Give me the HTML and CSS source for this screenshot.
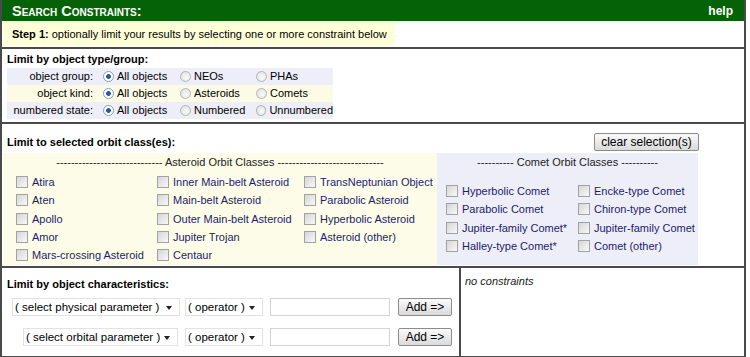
FILE: index.html
```html
<!DOCTYPE html>
<html>
<head>
    <title>Search Constraints</title>
    <link rel="stylesheet" href="styles.css">
</head>
<body>

<div class="panel">
    <div class="titlebar">
        <span class="title">Search Constraints:</span>
        <a class="help">help</a>
    </div>

    <div class="step">
        <span class="step-note"><b>Step 1:</b> optionally limit your results by selecting one or more constraint below</span>
    </div>

    <div class="section kinds">
        <div class="heading">Limit by object type/group:</div>
        <div class="choice-row odd">
            <span class="choice-label">object group:</span>
            <label class="opt"><span class="radio on"></span>All objects</label>
            <label class="opt"><span class="radio"></span>NEOs</label>
            <label class="opt"><span class="radio"></span>PHAs</label>
        </div>
        <div class="choice-row even">
            <span class="choice-label">object kind:</span>
            <label class="opt"><span class="radio on"></span>All objects</label>
            <label class="opt"><span class="radio"></span>Asteroids</label>
            <label class="opt"><span class="radio"></span>Comets</label>
        </div>
        <div class="choice-row odd">
            <span class="choice-label">numbered state:</span>
            <label class="opt"><span class="radio on"></span>All objects</label>
            <label class="opt"><span class="radio"></span>Numbered</label>
            <label class="opt"><span class="radio"></span>Unnumbered</label>
        </div>
    </div>

    <div class="section orbits">
        <div class="orbits-head">
            <div class="heading">Limit to selected orbit class(es):</div>
            <button class="btn">clear selection(s)</button>
        </div>
        <div class="orbit-tables">
            <div class="orbit-group asteroids">
                <div class="group-title">----------------------------- Asteroid Orbit Classes -----------------------------</div>
                <div class="check-grid ast-grid">
                    <label class="chk"><span class="box"></span>Atira</label>
                    <label class="chk"><span class="box"></span>Inner Main-belt Asteroid</label>
                    <label class="chk"><span class="box"></span>TransNeptunian Object</label>
                    <label class="chk"><span class="box"></span>Aten</label>
                    <label class="chk"><span class="box"></span>Main-belt Asteroid</label>
                    <label class="chk"><span class="box"></span>Parabolic Asteroid</label>
                    <label class="chk"><span class="box"></span>Apollo</label>
                    <label class="chk"><span class="box"></span>Outer Main-belt Asteroid</label>
                    <label class="chk"><span class="box"></span>Hyperbolic Asteroid</label>
                    <label class="chk"><span class="box"></span>Amor</label>
                    <label class="chk"><span class="box"></span>Jupiter Trojan</label>
                    <label class="chk"><span class="box"></span>Asteroid (other)</label>
                    <label class="chk"><span class="box"></span>Mars-crossing Asteroid</label>
                    <label class="chk"><span class="box"></span>Centaur</label>
                </div>
            </div>
            <div class="orbit-group comets">
                <div class="group-title">---------- Comet Orbit Classes ----------</div>
                <div class="comet-body">
                    <div class="check-grid comet-grid">
                        <label class="chk"><span class="box"></span>Hyperbolic Comet</label>
                        <label class="chk"><span class="box"></span>Encke-type Comet</label>
                        <label class="chk"><span class="box"></span>Parabolic Comet</label>
                        <label class="chk"><span class="box"></span>Chiron-type Comet</label>
                        <label class="chk"><span class="box"></span>Jupiter-family Comet*</label>
                        <label class="chk"><span class="box"></span>Jupiter-family Comet</label>
                        <label class="chk"><span class="box"></span>Halley-type Comet*</label>
                        <label class="chk"><span class="box"></span>Comet (other)</label>
                    </div>
                </div>
            </div>
        </div>
    </div>

    <div class="section chars">
        <div class="chars-form">
            <div class="heading">Limit by object characteristics:</div>
            <div class="param-row first">
                <span class="dropdown param-phys"><select><option>( select physical parameter )</option></select></span>
                <span class="dropdown op"><select><option>( operator )</option></select></span>
                <input type="text" class="value">
                <button class="btn add">Add =&gt;</button>
            </div>
            <div class="param-row second">
                <span class="dropdown param-orb"><select><option>( select orbital parameter )</option></select></span>
                <span class="dropdown op"><select><option>( operator )</option></select></span>
                <input type="text" class="value">
                <button class="btn add">Add =&gt;</button>
            </div>
        </div>
        <div class="chars-list">no constraints</div>
    </div>
</div>

</body>
</html>
```

FILE: styles.css
```css
body {
    margin: 0;
    background: #fff;
    font-family: 'Liberation Sans', Arial, sans-serif;
    font-size: 11px;
    color: #000;
}

.panel {
    width: 742px;
    border: 2px solid #4a4a4a;
    border-top: 0;
}

.titlebar {
    height: 21px;
    background: #066206;
    color: #fff;
    display: flex;
    justify-content: space-between;
    align-items: center;
    padding: 0 11px 0 10px;
    font-weight: bold;
}

.title {
    font-size: 14.5px;
    font-variant: small-caps;
}

.help {
    font-size: 12px;
    cursor: pointer;
}

.step {
    padding: 1px 0 1px 1px;
    border-bottom: 2px solid #4a4a4a;
}

.step-note {
    display: inline-block;
    background: #ffffd8;
    padding: 5px 8px 5px 9px;
    line-height: 14px;
}

.section {
    border-bottom: 2px solid #4a4a4a;
}

.heading {
    font-weight: bold;
    line-height: 14px;
}

/* object type / group */
.kinds {
    padding: 3px 0 3px 5px;
}

.kinds .heading {
    margin-bottom: 2px;
}

.choice-row {
    display: grid;
    grid-template-columns: 94px 77px 76px 79px;
    width: 326px;
    line-height: 17px;
}

.choice-row.odd {
    background: #eeeef8;
}

.choice-row.even {
    background: #fcfce6;
}

.choice-label {
    text-align: right;
    padding-right: 8px;
}

.opt {
    display: flex;
    align-items: center;
    padding-left: 2px;
    white-space: nowrap;
}

.radio {
    width: 9px;
    height: 9px;
    border-radius: 50%;
    border: 1px solid #b4b4b4;
    background: radial-gradient(circle at 60% 60%, #fafafa, #dcdcdc);
    margin-right: 3px;
}

.radio.on {
    border-color: #8a9ab8;
    background: radial-gradient(circle, #2a56a6 0, #2a56a6 2px, #fff 2.8px);
}

/* orbit classes */
.orbits {
    padding: 9px 0 1px 1px;
}

.orbits-head {
    display: flex;
    justify-content: space-between;
    align-items: center;
    padding: 0 45px 0 4px;
    margin-bottom: 2px;
}

.btn {
    font-family: 'Liberation Sans', Arial, sans-serif;
    font-size: 12px;
    height: 18px;
    padding: 0 6px;
    border: 1px solid #8c8c8c;
    border-radius: 2px;
    background: linear-gradient(#fbfbfb, #dadada);
    color: #000;
    cursor: pointer;
}

.orbits .btn {
    width: 105px;
}

.orbit-tables {
    display: flex;
    height: 112px;
}

.orbit-group {
    display: flex;
    flex-direction: column;
    padding-top: 2px;
}

.asteroids {
    width: 434px;
    background: #fcfce8;
}

.comets {
    width: 261px;
    background: #eeeef8;
}

.group-title {
    text-align: center;
    line-height: 14px;
    color: #222;
}

.check-grid {
    display: grid;
}

.ast-grid {
    grid-template-columns: 141px 147px 1fr;
    padding: 4px 0 0 10px;
}

.comet-body {
    flex: 1;
    display: flex;
    align-items: center;
}

.comet-grid {
    grid-template-columns: 132px 1fr;
    padding: 3px 0 0 6px;
}

.chk {
    display: flex;
    align-items: center;
    height: 18.3px;
    color: #1c1c6a;
    white-space: nowrap;
}

.box {
    width: 10px;
    height: 10px;
    margin: 0 4px 0 3px;
    border: 1px solid #a2a2a2;
    background: linear-gradient(135deg, #d6d6d6, #f8f8f8);
}

/* object characteristics */
.chars {
    display: grid;
    grid-template-columns: 459px 1fr;
    height: 88px;
}

.chars-form {
    border-right: 2px solid #4a4a4a;
    padding: 9px 0 0 5px;
}

.chars-form .heading {
    margin-bottom: 7px;
}

.param-row {
    display: flex;
    align-items: center;
    padding-left: 5px;
}

.param-row.second {
    margin-top: 12px;
    padding-left: 16px;
}

.dropdown {
    position: relative;
    display: inline-block;
}

.dropdown::after {
    content: '';
    position: absolute;
    right: 8px;
    top: 8px;
    border-left: 3.5px solid transparent;
    border-right: 3.5px solid transparent;
    border-top: 4px solid #222;
}

.dropdown select {
    appearance: none;
    -webkit-appearance: none;
    height: 18px;
    border: 1px solid #e2e2e2;
    background: #fff;
    font-family: 'Liberation Sans', Arial, sans-serif;
    font-size: 11.5px;
    color: #000;
    padding: 0 0 0 2px;
    margin: 0;
}

.param-phys select {
    width: 168px;
}

.param-orb select {
    width: 155px;
}

.op {
    margin-left: 7px;
}

.param-row.first .op {
    margin-left: 5px;
}

.op select {
    width: 78px;
}

.value {
    width: 120px;
    height: 18px;
    box-sizing: border-box;
    margin: 0 0 0 7px;
    border: 1px solid #d4d4d4;
}

.add {
    width: 54px;
    margin-left: 8px;
}

.chars-list {
    padding: 7px 0 0 4px;
    font-style: italic;
    color: #222;
}
```
